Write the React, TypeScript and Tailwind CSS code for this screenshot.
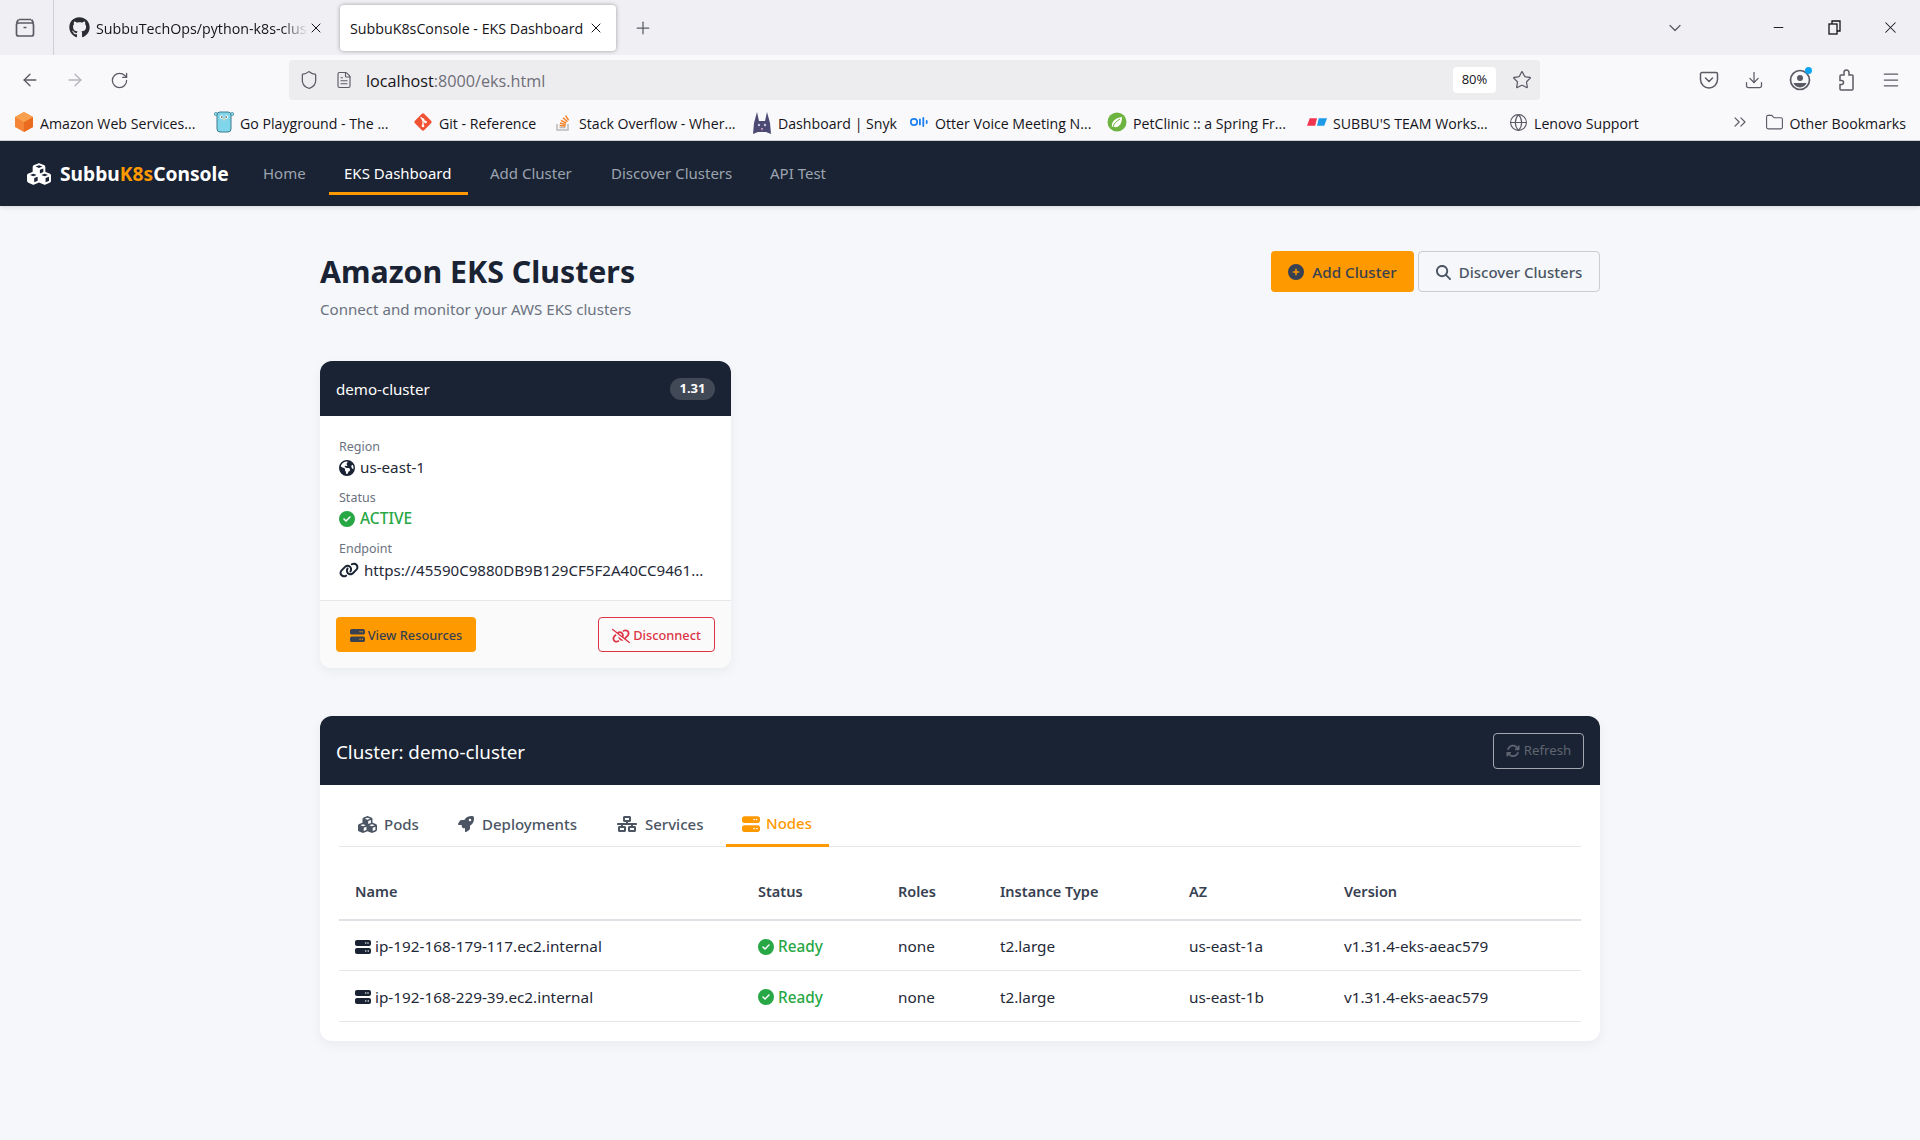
import {
  FaArrowsRotate,
  FaCircleCheck,
  FaCirclePlus,
  FaCubes,
  FaEarthAmericas,
  FaGithub,
  FaLink,
  FaLinkSlash,
  FaMagnifyingGlass,
  FaNetworkWired,
  FaRocket,
  FaServer,
} from 'react-icons/fa6';
import {
  ArrowLeft,
  ArrowRight,
  ChevronDown,
  ChevronsRight,
  Download,
  FileText,
  Folder,
  Globe,
  Menu,
  Minus,
  Plus,
  RotateCw,
  Shield,
  Star,
  X,
} from 'lucide-react';

const UI_FONT = 'font-["Noto_Sans","Open_Sans",sans-serif]';

// ── Browser chrome ────────────────────────────────────────────────────────────

function AwsIcon() {
  return (
    <svg width="18" height="20" viewBox="0 0 18 20">
      <path d="M9 0l9 5v10l-9 5-9-5V5z" fill="#f58536" />
      <path d="M9 10l9-5v10l-9 5z" fill="#e96c1f" />
      <path d="M9 0l9 5-9 5-9-5z" fill="#f9a04f" />
    </svg>
  );
}

function GopherIcon() {
  return (
    <svg width="20" height="22" viewBox="0 0 20 22">
      <rect x="3" y="1" width="14" height="20" rx="3" fill="#7fd5ea" stroke="#3d7a8c" />
      <circle cx="1.8" cy="3" r="1.6" fill="#7fd5ea" stroke="#3d7a8c" strokeWidth=".6" />
      <circle cx="18.2" cy="3" r="1.6" fill="#7fd5ea" stroke="#3d7a8c" strokeWidth=".6" />
      <circle cx="7.5" cy="6" r="1.8" fill="#fff" />
      <circle cx="12.5" cy="6" r="1.8" fill="#fff" />
      <circle cx="7.8" cy="6" r=".8" fill="#222" />
      <circle cx="12.2" cy="6" r=".8" fill="#222" />
      <rect x="8.7" y="7.6" width="2.6" height="1.8" rx=".8" fill="#e8d9b5" />
    </svg>
  );
}

function GitIcon() {
  return (
    <svg width="22" height="22" viewBox="0 0 21 21">
      <rect x="3.5" y="3.5" width="14" height="14" rx="2" transform="rotate(45 10.5 10.5)" fill="#f05133" />
      <path d="M8 5.5l5 5M10.5 8v6" stroke="#fff" strokeWidth="1.3" />
      <circle cx="10.5" cy="8" r="1.4" fill="#fff" />
      <circle cx="13.2" cy="10.6" r="1.4" fill="#fff" />
      <circle cx="10.5" cy="14.6" r="1.4" fill="#fff" />
    </svg>
  );
}

function StackIcon() {
  return (
    <svg width="17" height="20" viewBox="0 0 17 20">
      <path d="M2 12v6h11v-6" fill="none" stroke="#bcbbbb" strokeWidth="1.6" />
      <path d="M4.5 15.5h6" stroke="#bcbbbb" strokeWidth="1.6" />
      <path d="M4.6 13.4l6 .6M5 11l5.8 1.6M6 8.4l5.2 2.8M8 5.8l4.4 4M10.6 3.6l3 4.8" stroke="#f48024" strokeWidth="1.5" />
    </svg>
  );
}

function SnykIcon() {
  return (
    <svg width="20" height="24" viewBox="0 0 20 24">
      <path d="M1 23l1-11L5 1l2 9h6l2-9 3 11 1 11-5-2H6z" fill="#4c4a73" />
      <circle cx="7" cy="14" r="1.2" fill="#c9c6e8" />
      <circle cx="13" cy="14" r="1.2" fill="#c9c6e8" />
      <path d="M9 17h2l-1 3z" fill="#e3a5c7" />
    </svg>
  );
}

function OtterIcon() {
  return (
    <svg width="18" height="10" viewBox="0 0 18 10">
      <circle cx="4" cy="5" r="3.2" fill="none" stroke="#1a7ff0" strokeWidth="1.7" />
      <rect x="9" y="1.5" width="1.8" height="7" rx=".9" fill="#1a7ff0" />
      <rect x="12.4" y="0" width="1.8" height="10" rx=".9" fill="#1a7ff0" />
      <rect x="15.8" y="3" width="1.8" height="4" rx=".9" fill="#1a7ff0" />
    </svg>
  );
}

function SpringIcon() {
  return (
    <svg width="20" height="20" viewBox="0 0 20 20">
      <circle cx="10" cy="10" r="9.5" fill="#6db33f" />
      <path d="M5 15c-1-5 3-9 10-10 0 7-3 11-8 10" fill="#fff" />
      <path d="M6 15c1-4 4-6 7-8" stroke="#6db33f" fill="none" />
    </svg>
  );
}

function SubbuTeamIcon() {
  return (
    <svg width="22" height="10" viewBox="0 0 22 10">
      <path d="M3 1h8L9 9H0z" fill="#f0354f" />
      <path d="M13 1h9l-3 8h-8z" fill="#1d9be8" />
    </svg>
  );
}

function PocketIcon() {
  return (
    <svg width="20" height="20" viewBox="0 0 20 20" fill="none" stroke="currentColor" strokeWidth="1.5">
      <path d="M3 2.5h14a1.5 1.5 0 0 1 1.5 1.5v5.5a8.5 8.5 0 0 1-17 0V4A1.5 1.5 0 0 1 3 2.5z" />
      <path d="M6.5 8l3.5 3.5L13.5 8" strokeLinecap="round" />
    </svg>
  );
}

function ExtensionIcon() {
  return (
    <svg width="20" height="22" viewBox="0 0 20 22" fill="none" stroke="currentColor" strokeWidth="1.5">
      <path d="M8 6V3.5a2.5 2.5 0 0 1 5 0V6h3a1 1 0 0 1 1 1v13a1 1 0 0 1-1 1H5a1 1 0 0 1-1-1v-4.5h1.5a2 2 0 0 0 0-4H4V7a1 1 0 0 1 1-1z" />
    </svg>
  );
}

const BOOKMARKS = [
  { label: 'Amazon Web Services...', icon: <AwsIcon />, w: 'w-[200px]' },
  { label: 'Go Playground - The ...', icon: <GopherIcon />, w: 'w-[199px]' },
  { label: 'Git - Reference', icon: <GitIcon />, w: 'w-[140px]' },
  { label: 'Stack Overflow - Wher...', icon: <StackIcon />, w: 'w-[199px]' },
  { label: 'Dashboard | Snyk', icon: <SnykIcon />, w: 'w-[157px]' },
  { label: 'Otter Voice Meeting N...', icon: <OtterIcon />, w: 'w-[198px]' },
  { label: 'PetClinic :: a Spring Fr...', icon: <SpringIcon />, w: 'w-[200px]' },
  { label: "SUBBU'S TEAM Works...", icon: <SubbuTeamIcon />, w: 'w-[202px]' },
];

function BrowserChrome() {
  return (
    <div className="font-['Open_Sans',sans-serif] text-[#15141a]">
      {/* tabs */}
      <div className="flex h-[55px] items-center bg-[#f0f0f4]">
        <div className="flex h-full w-[54px] shrink-0 items-center border-r border-[#cfcfd8] pl-[14px]">
          <svg width="22" height="22" viewBox="0 0 22 22" fill="none" stroke="#5b5b66" strokeWidth="1.7">
            <rect x="2.5" y="6" width="17" height="13" rx="2" />
            <path d="M5 2.5h12M2.5 6l2-3.5M19.5 6l-2-3.5M9.5 10.5h3" />
          </svg>
        </div>
        <div className="flex w-[286px] items-center pl-[15px] text-[14.25px]">
          <FaGithub className="mr-[6px] shrink-0 text-[21px] text-[#2b2b33]" />
          <span className="w-[212px] whitespace-nowrap pt-[2px] [mask-image:linear-gradient(90deg,#000_88%,transparent)]">
            SubbuTechOps/python-k8s-clus
          </span>
          <X className="shrink-0" size={16} strokeWidth={1.5} />
        </div>
        <div className="flex h-[46px] w-[276px] items-center rounded-[4px] bg-white pl-[10px] text-[14.25px] shadow-[0_0_4px_rgba(0,0,0,0.35)]">
          <span className="w-[238px] whitespace-nowrap pt-[2px]">SubbuK8sConsole - EKS Dashboard</span>
          <X className="shrink-0" size={16} strokeWidth={1.5} />
        </div>
        <Plus className="ml-[17px] text-[#5b5b66]" size={20} strokeWidth={1.5} />
        <div className="ml-auto flex items-center pr-[20px]">
          <ChevronDown className="mr-[86px] text-[#5b5b66]" size={20} strokeWidth={1.5} />
          <Minus className="mr-[42px]" size={15} strokeWidth={1.5} />
          <svg className="mr-[39px]" width="14" height="16" viewBox="0 0 14 16" fill="none" stroke="#15141a" strokeWidth="1.3">
            <rect x="1" y="4" width="8" height="10" />
            <path d="M4 4V1h8v10H9" />
          </svg>
          <X size={19} strokeWidth={1.3} />
        </div>
      </div>

      {/* url bar */}
      <div className="flex h-[50px] items-center bg-[#f9f9fb] text-[#5b5b66]">
        <div className="flex w-[289px] shrink-0 items-center gap-[25px] pl-[20px]">
          <ArrowLeft size={20} strokeWidth={1.6} />
          <ArrowRight className="text-[#b4b4ba]" size={20} strokeWidth={1.6} />
          <RotateCw size={19} strokeWidth={1.6} />
        </div>
        <div className="flex h-[40px] w-[1251px] items-center rounded-[4px] bg-[#ededf0] pl-[10px] pr-[8px]">
          <Shield size={20} strokeWidth={1.5} />
          <FileText className="ml-[16px]" size={18} strokeWidth={1.5} />
          <span className="ml-[13px] pt-[2px] text-[16.2px]">
            <span className="text-[#15141a]">localhost</span>
            <span className="text-[#6f6f78]">:8000/eks.html</span>
          </span>
          <span className="ml-auto flex h-[26px] w-[43px] items-center justify-center rounded-[4px] bg-white text-[13px] text-[#15141a]">80%</span>
          <Star className="ml-[16px]" size={20} strokeWidth={1.5} />
        </div>
        <div className="ml-auto flex items-center gap-[25px] pr-[19px]">
          <PocketIcon />
          <Download size={20} strokeWidth={1.5} />
          <div className="relative">
            <svg width="22" height="22" viewBox="0 0 22 22">
              <circle cx="11" cy="11" r="9.5" fill="none" stroke="#5b5b66" strokeWidth="1.7" />
              <circle cx="11" cy="9" r="3" fill="#5b5b66" />
              <path d="M4.5 14h13a7 7 0 0 1-13 0z" fill="#5b5b66" />
            </svg>
            <span className="absolute -right-[1px] -top-[2px] h-[7px] w-[7px] rounded-full bg-[#0ea5f0]" />
          </div>
          <ExtensionIcon />
          <Menu size={20} strokeWidth={1.5} />
        </div>
      </div>

      {/* bookmarks */}
      <div className="flex h-[36px] items-center border-b border-[#d4d4d8] bg-[#f9f9fb] pl-[14px] text-[14.15px] text-[#15141a]">
        {BOOKMARKS.map((b) => (
          <div key={b.label} className={`flex items-center gap-[6px] whitespace-nowrap ${b.w}`}>
            <span className="flex w-[20px] shrink-0 justify-center">{b.icon}</span>
            <span className="pt-[2px]">{b.label}</span>
          </div>
        ))}
        <div className="flex items-center gap-[6px] whitespace-nowrap">
          <Globe className="text-[#5b5b66]" size={19} strokeWidth={1.4} />
          <span className="pt-[2px]">Lenovo Support</span>
        </div>
        <div className="ml-auto flex items-center whitespace-nowrap pr-[14px]">
          <ChevronsRight className="mr-[15px] text-[#5b5b66]" size={20} strokeWidth={1.4} />
          <Folder className="mr-[5px] text-[#5b5b66]" size={19} strokeWidth={1.4} />
          <span className="pt-[2px]">Other Bookmarks</span>
        </div>
      </div>
    </div>
  );
}

// ── App nav ───────────────────────────────────────────────────────────────────

function NavBar() {
  const links = [
    { label: 'Home', w: 'w-[82px] pl-[16px]' },
    { label: 'EKS Dashboard', active: true, w: 'w-[139px] pl-[15px] mr-[6px]' },
    { label: 'Add Cluster', w: 'w-[121px] pl-[16px]' },
    { label: 'Discover Clusters', w: 'w-[159px] pl-[16px]' },
    { label: 'API Test', w: 'w-[100px] pl-[16px]' },
  ];
  return (
    <nav className="flex h-[65px] items-center bg-[#1a2333] pl-[27px] shadow-[0_2px_4px_rgba(0,0,0,0.1)]">
      <div className="flex w-[220px] shrink-0 items-center pt-[2px] text-[19.2px] font-bold text-white">
        <FaCubes className="mr-[9px] text-[24px]" />
        Subbu<span className="text-[#ff9900]">K8s</span>Console
      </div>
      {links.map((l) => (
        <a
          key={l.label}
          className={[
            'flex h-[43px] shrink-0 items-center text-[15px]',
            l.w,
            l.active ? 'border-b-[3px] border-[#ff9900] pt-[3px] text-white' : 'text-[#9ca3af]',
          ].join(' ')}
        >
          {l.label}
        </a>
      ))}
    </nav>
  );
}

// ── Cluster card ──────────────────────────────────────────────────────────────

function Info({ label, children }: { label: string; children: React.ReactNode }) {
  return (
    <div className="mb-[9px] last:mb-0">
      <div className="text-[12.5px] leading-[19px] text-[#6b7280]">{label}</div>
      <div className="flex h-[23px] items-center gap-[5px] text-[15.2px] text-[#1f2937]">{children}</div>
    </div>
  );
}

function ClusterCard() {
  return (
    <div className="w-[411px] overflow-hidden rounded-[12px] bg-white shadow-[0_4px_12px_rgba(0,0,0,0.05)]">
      <div className="flex h-[55px] items-center justify-between bg-[#1a2333] px-[16px] text-white">
        <span className="pt-[2px] text-[15.1px]">demo-cluster</span>
        <span className="flex h-[22px] w-[45px] items-center justify-center rounded-full bg-[#414957] text-[13px] font-bold">1.31</span>
      </div>
      <div className="h-[185px] border-b border-[#e5e7eb] px-[19px] pt-[21px]">
        <Info label="Region">
          <FaEarthAmericas className="text-[16px] text-[#1a2333]" />
          us-east-1
        </Info>
        <Info label="Status">
          <FaCircleCheck className="text-[16px] text-[#28a745]" />
          <span className="text-[15.5px] font-medium text-[#28a745]">ACTIVE</span>
        </Info>
        <Info label="Endpoint">
          <FaLink className="text-[20px] text-[#1a2333]" />
          <span className="whitespace-nowrap pt-[2px] text-[15.1px]">https://45590C9880DB9B129CF5F2A40CC9461...</span>
        </Info>
      </div>
      <div className="flex h-[67px] items-center justify-between bg-[#fafafa] px-[16px]">
        <button className="flex h-[35px] w-[140px] items-center justify-center gap-[3px] rounded-[4px] bg-[#ff9900] pt-[2px] text-[12.8px] font-medium text-[#374151]">
          <FaServer className="text-[15px]" />
          View Resources
        </button>
        <button className="flex h-[35px] w-[117px] items-center justify-center gap-[3px] rounded-[4px] border border-[#dc3545] pt-[2px] text-[12.8px] font-medium text-[#dc3545]">
          <FaLinkSlash className="text-[18px]" />
          Disconnect
        </button>
      </div>
    </div>
  );
}

// ── Resources panel ───────────────────────────────────────────────────────────

const TABS = [
  { label: 'Pods', icon: <FaCubes className="text-[19px]" />, w: 'w-[100px] gap-[7px]' },
  { label: 'Deployments', icon: <FaRocket className="text-[16px]" />, w: 'w-[159px] gap-[8px]' },
  { label: 'Services', icon: <FaNetworkWired className="text-[20px]" />, w: 'w-[125px] gap-[8px]' },
  { label: 'Nodes', icon: <FaServer className="text-[18px]" />, w: 'w-[103px] gap-[6px]', active: true },
];

const NODES = [
  { name: 'ip-192-168-179-117.ec2.internal', az: 'us-east-1a', rowH: 'h-[50px]' },
  { name: 'ip-192-168-229-39.ec2.internal', az: 'us-east-1b', rowH: 'h-[51px]' },
];

function ResourcesPanel() {
  return (
    <div className="mt-[48px] overflow-hidden rounded-[12px] bg-white shadow-[0_4px_12px_rgba(0,0,0,0.05)]">
      <div className="flex h-[69px] items-center justify-between bg-[#1a2333] px-[16px]">
        <span className="pt-[3px] text-[18.8px] text-white">Cluster: demo-cluster</span>
        <button className="flex h-[36px] w-[91px] items-center justify-center gap-[4px] rounded-[4px] border border-[#a3a8b0] text-[13.2px] text-[#5f6570]">
          <FaArrowsRotate className="text-[14px]" />
          Refresh
        </button>
      </div>
      <div className="px-[19px] pb-[19px] pt-[19px]">
        <div className="flex h-[43px] border-b border-[#e5e7eb] pl-[3px] text-[15px] font-medium text-[#4b5563]">
          {TABS.map((t) => (
            <div
              key={t.label}
              className={[
                'mb-[-1px] flex items-center pl-[16px]',
                t.w,
                t.active ? 'border-b-[3px] border-[#ff9900] pb-[1px] text-[#ff9900]' : 'pb-[3px]',
              ].join(' ')}
            >
              {t.icon}
              {t.label}
            </div>
          ))}
        </div>
        <table className="mt-[16px] w-full border-collapse text-left text-[15.3px] text-[#1f2937]">
          <thead>
            <tr className="h-[57px] border-b-2 border-[#dee2e6] text-[14.5px] text-[#374151] [&>th]:pt-[1px]">
              <th className="w-[403px] pl-[16px] font-semibold">Name</th>
              <th className="w-[140px] pl-[16px] font-semibold">Status</th>
              <th className="w-[102px] pl-[16px] font-semibold">Roles</th>
              <th className="w-[189px] pl-[16px] font-semibold">Instance Type</th>
              <th className="w-[155px] pl-[16px] font-semibold">AZ</th>
              <th className="pl-[16px] font-semibold">Version</th>
            </tr>
          </thead>
          <tbody>
            {NODES.map((n) => (
              <tr key={n.name} className={`${n.rowH} border-b border-[#e5e7eb] [&>td]:pt-[3px]`}>
                <td className="pl-[16px]">
                  <span className="flex items-center gap-[4px]">
                    <FaServer className="text-[16px] text-[#1a2333]" />
                    {n.name}
                  </span>
                </td>
                <td className="pl-[16px]">
                  <span className="flex items-center gap-[4px] font-medium text-[#28a745]">
                    <FaCircleCheck className="text-[16px]" />
                    Ready
                  </span>
                </td>
                <td className="pl-[16px]">none</td>
                <td className="pl-[16px]">t2.large</td>
                <td className="pl-[16px]">{n.az}</td>
                <td className="pl-[16px]">v1.31.4-eks-aeac579</td>
              </tr>
            ))}
          </tbody>
        </table>
      </div>
    </div>
  );
}

// ── Page ──────────────────────────────────────────────────────────────────────

export default function App() {
  return (
    <div className={`min-h-[1140px] bg-[#f5f7fa] ${UI_FONT}`}>
      <BrowserChrome />
      <NavBar />
      <main className="mx-auto w-[1280px] pt-[44px]">
        <div className="mb-[40px] flex items-start justify-between">
          <div>
            <h1 className="text-[30.3px] font-bold leading-[44px] text-[#1a2333]">Amazon EKS Clusters</h1>
            <p className="mt-[3px] text-[15.1px] leading-[24px] text-[#6b7280]">Connect and monitor your AWS EKS clusters</p>
          </div>
          <div className="mt-[1px] flex gap-[4px]">
            <button className="flex h-[41px] w-[143px] items-center justify-center gap-[8px] rounded-[4px] bg-[#ff9900] pt-[1px] text-[15.2px] font-medium text-[#374151]">
              <FaCirclePlus className="text-[16px]" />
              Add Cluster
            </button>
            <button className="flex h-[41px] w-[182px] items-center justify-center gap-[8px] rounded-[4px] border border-[#c9ccd1] pt-[1px] text-[15px] font-medium text-[#4b5563]">
              <FaMagnifyingGlass className="text-[15px]" />
              Discover Clusters
            </button>
          </div>
        </div>
        <ClusterCard />
        <ResourcesPanel />
      </main>
    </div>
  );
}
